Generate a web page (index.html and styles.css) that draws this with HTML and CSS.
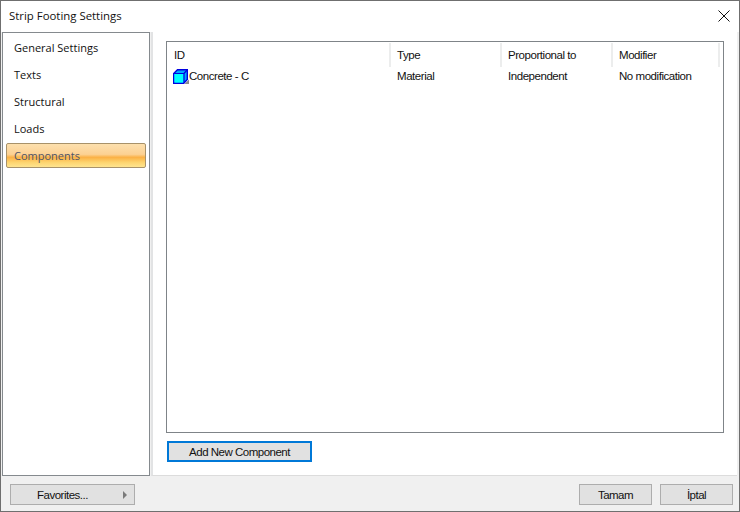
FILE: index.html
```html
<!DOCTYPE html>
<html lang="en">
<head>
<meta charset="utf-8">
<title>Strip Footing Settings</title>
<link rel="stylesheet" href="styles.css">
</head>
<body>
<div class="window">
  <header class="titlebar">
    <span class="title">Strip Footing Settings</span>
    <svg class="close" width="12" height="12" viewBox="0 0 12 12"><path d="M.5.5l11 11M11.5.5l-11 11" stroke="#111" stroke-width="1" fill="none"/></svg>
  </header>
  <div class="body">
    <nav class="nav">
      <div class="nav-item">General Settings</div>
      <div class="nav-item">Texts</div>
      <div class="nav-item">Structural</div>
      <div class="nav-item">Loads</div>
      <div class="nav-item active">Components</div>
    </nav>
    <main class="panel">
      <div class="list">
        <div class="row head">
          <div class="cell c1">ID</div>
          <div class="cell c2">Type</div>
          <div class="cell c3">Proportional to</div>
          <div class="cell c4">Modifier</div>
        </div>
        <div class="row data">
          <div class="cell c1 idcell">
            <svg class="cube" width="16" height="15" viewBox="0 0 16 15">
              <path d="M.7 4.5L4.5.7H14.3V10.5L10.8 14.3H.7Z" fill="#00a8ff" stroke="#0000e0" stroke-width="1.4"/>
              <path d="M1.4 4.6H10.6V13.6H1.4Z" fill="#00ffff"/>
              <path d="M1 4.5H11V14M11 4.5L14 1" fill="none" stroke="#0000e0" stroke-width="1.2"/>
              <path d="M11.5 15h4.5v-4.5z" fill="#8a8a8a"/>
            </svg>
            <span>Concrete - C</span>
          </div>
          <div class="cell c2">Material</div>
          <div class="cell c3">Independent</div>
          <div class="cell c4">No modification</div>
        </div>
      </div>
      <div class="panel-actions">
        <button class="btn add">Add New Component</button>
      </div>
    </main>
  </div>
  <footer class="footer">
    <button class="btn fav"><span>Favorites...</span><i class="arrow"></i></button>
    <div class="footer-right">
      <button class="btn ok">Tamam</button>
      <button class="btn ok">İptal</button>
    </div>
  </footer>
</div>
</body>
</html>
```
FILE: styles.css
```css
* { box-sizing: border-box; }
html, body { margin: 0; padding: 0; }
body { width: 740px; height: 512px; overflow: hidden; font-family: "Liberation Sans", Arial, sans-serif; font-size: 12px; color: #111; }
.window { width: 740px; height: 512px; border: 1px solid #6f6f6f; background: #f0f0f0; display: flex; flex-direction: column; }
.titlebar { height: 31px; flex: none; background: #fff; display: flex; align-items: center; justify-content: space-between; padding: 0 9px 2px 8px; }
.title { font-family: "Open Sans", sans-serif; font-size: 11.4px; color: #111; }
.close { display: block; }
.body { height: 444px; flex: none; display: flex; padding-left: 1px; }
.nav { width: 148px; flex: none; height: 444px; background: #fff; border: 1px solid #858a8e; padding: 1px 3px 0 3px; display: flex; flex-direction: column; }
.nav-item { height: 27px; flex: none; padding-left: 8px; display: flex; align-items: center; font-family: "Open Sans", sans-serif; font-size: 11px; color: #111; }
.nav-item.active { height: 25px; margin-top: 1px; border: 1px solid #a8926a; border-radius: 2px; padding-left: 7px; color: #4f5468; background: linear-gradient(#fde0ae 0%, #fcd193 45%, #fbb146 58%, #fdd46f 80%, #ffe48f 100%); }
.panel { width: 586px; flex: none; margin-left: 1px; background: #fff; border-left: 2px solid #e2e3e4; border-bottom: 1px solid #dcdcdc; padding: 9px 13px 0 13px; display: flex; flex-direction: column; }
.list { height: 392px; flex: none; border: 1px solid #7f8488; background: #fff; padding-top: 1px; }
.row { display: flex; }
.head { height: 24px; }
.data { height: 18px; }
.cell { padding-left: 6px; display: flex; align-items: center; font-size: 11.5px; letter-spacing: -.45px; }
.head .cell { border-right: 2px solid #eceded; height: 24px; }
.c1 { width: 224px; }
.c2 { width: 111px; }
.c3 { width: 111px; }
.c4 { width: 107px; }
.idcell { padding-left: 6px; }
.head .c1 { padding-left: 7px; }
.cube { display: block; flex: none; }
.panel-actions { padding: 8px 0 0 1px; }
.btn { font-family: "Liberation Sans", Arial, sans-serif; font-size: 11.5px; letter-spacing: -.5px; color: #111; background: #e1e1e1; border: 1px solid #adadad; padding: 0; height: 21px; display: flex; align-items: center; justify-content: center; border-radius: 0; }
.add { width: 145px; border: 2px solid #0078d7; }
.footer { flex: 1; display: flex; justify-content: space-between; align-items: flex-start; padding: 8px 6px 0 9px; }
.fav { width: 125px; position: relative; }
.fav span { margin-right: 20px; }
.arrow { position: absolute; right: 7px; top: 6px; border-left: 4px solid #7a7a7a; border-top: 4px solid transparent; border-bottom: 4px solid transparent; }
.footer-right { display: flex; gap: 8px; }
.ok { width: 73px; }
```
